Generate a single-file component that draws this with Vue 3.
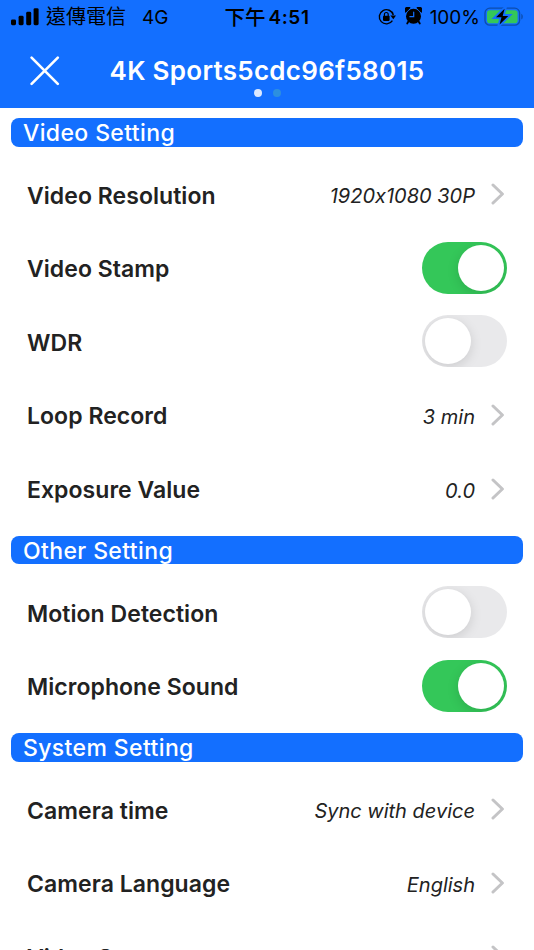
<template>
  <div class="page">
    <header class="header">
      <!-- phone status bar -->
      <div class="status">
        <div class="status-left">
          <svg class="signal" width="28" height="18" viewBox="0 0 28 18">
            <rect x="0" y="11.4" width="5" height="5.8" rx="1.4" />
            <rect x="7.6" y="7.8" width="5" height="9.4" rx="1.4" />
            <rect x="15.2" y="3.8" width="5" height="13.4" rx="1.4" />
            <rect x="22.6" y="0.2" width="5" height="17" rx="1.4" />
          </svg>
          <span class="carrier">遠傳電信</span>
          <span class="network">4G</span>
        </div>
        <div class="clock"><span class="period">下午</span><span class="time">4:51</span></div>
        <div class="status-right">
          <svg class="lock" width="18" height="18" viewBox="0 0 18 18">
            <path d="M14.4 12.6A7.1 7.1 0 1 1 15.3 7" fill="none" stroke="#000" stroke-width="1.4" />
            <path d="M12.4 7.5H18l-2.7 3.8z" />
            <rect x="5" y="7.7" width="6.6" height="5.2" rx="0.8" />
            <path d="M6.4 8V6.500a1.900 2 0 0 1 3.800 0V8" fill="none" stroke="#000" stroke-width="1.200" />
          </svg>
          <svg class="alarm" width="17" height="18" viewBox="0 0 17 18">
            <circle cx="8.5" cy="9.3" r="7.500" />
            <path d="M.6 5.400A3 3 0 0 1 5.200.8zM16.400 5.400A3 3 0 0 0 11.800.8z" stroke="#000" stroke-width=".8" stroke-linejoin="round" />
            <path d="M3.800 13.800l-1.600 2.700M13.200 13.800l1.600 2.700" stroke="#000" stroke-width="1.800" stroke-linecap="round" />
            <path d="M8.700 5.200v4.500H4.900" fill="none" stroke="#136fff" stroke-width="1.200" stroke-linecap="round" />
          </svg>
          <span class="percent">100%</span>
          <svg class="battery" width="40" height="20" viewBox="0 0 40 20">
            <rect x="1" y="1.200" width="34.600" height="17" rx="4.800" fill="none" stroke="#0c4dae" stroke-width="1.300" />
            <rect x="3" y="3.200" width="30.600" height="13" rx="2.800" fill="#34c759" />
            <path d="M37.300 6.800c2 .8 2 5 0 5.800z" fill="#0c4dae" />
            <path d="M20.600 1.800L12 10.200h5.500L15.600 17.500 24.300 8.900h-5.600z" stroke="#136fff" stroke-width="3.600" />
            <path d="M20.600 1.800L12 10.200h5.500L15.600 17.500 24.300 8.900h-5.600z" />
          </svg>
        </div>
      </div>
      <div class="navbar">
        <svg class="close" width="30" height="30" viewBox="0 0 30 30">
          <path d="M1.600 1.600l26.200 26.200M27.800 1.600L1.600 27.800" />
        </svg>
        <div class="heading">
          <h1>4K Sports5cdc96f58015</h1>
          <div class="dots"><i class="dot active"></i><i class="dot"></i></div>
        </div>
      </div>
    </header>

    <main>
      <section v-for="section in sections" :key="section.title">
        <h2>{{ section.title }}</h2>
        <ul>
          <li v-for="item in section.items" :key="item.name" @click="toggle(item)">
            <span class="name">{{ item.name }}</span>
            <span v-if="item.type == 'switch'" :class="item.on ? 'switch on' : 'switch'"></span>
            <template v-else>
              <span class="value">{{ item.value }}</span>
              <svg class="arrow" width="14" height="22" viewBox="0 0 14 22">
                <path d="M2 2l9.400 9L2 20" />
              </svg>
            </template>
          </li>
        </ul>
      </section>
    </main>
  </div>
</template>

<script setup>
import { reactive } from "vue";

const sections = reactive([
  {
    title: "Video Setting",
    items: [
      { name: "Video Resolution", value: "1920x1080 30P" },
      { name: "Video Stamp", type: "switch", on: true },
      { name: "WDR", type: "switch", on: false },
      { name: "Loop Record", value: "3 min" },
      { name: "Exposure Value", value: "0.0" },
    ],
  },
  {
    title: "Other Setting",
    items: [
      { name: "Motion Detection", type: "switch", on: false },
      { name: "Microphone Sound", type: "switch", on: true },
    ],
  },
  {
    title: "System Setting",
    items: [
      { name: "Camera time", value: "Sync with device" },
      { name: "Camera Language", value: "English" },
      { name: "Video S", value: "" },
    ],
  },
]);

const toggle = (item) => {
  if (item.type == "switch") item.on = !item.on;
};
</script>

<style>
body {
  margin: 0;
  background: #fff;
}
</style>

<style scoped>
.page {
  height: 950px;
  overflow: hidden;
  background: #fff;
  font-family: Inter, "Noto Sans CJK TC", sans-serif;
  color: #222;
}
.header {
  height: 107.5px;
  background: #136fff;
}
.status {
  display: grid;
  grid-template-columns: 1fr auto 1fr;
  align-items: center;
  height: 35px;
  padding: 0 10px 0 11px;
  color: #000;
  font-size: 19px;
  line-height: 35px;
}
.status-left,
.status-right,
.clock {
  display: flex;
  align-items: center;
  white-space: nowrap;
}
.status-right {
  justify-content: flex-end;
}
.signal {
  margin: 0 7px 2px 0;
}
.carrier {
  font-size: 20px;
}
.network {
  margin-left: 16px;
}
.clock {
  margin-right: 1px;
}
.period {
  font-size: 20.5px;
  font-weight: 500;
}
.time {
  margin-left: 3px;
  font-weight: 600;
  letter-spacing: 0.6px;
}
.lock {
  margin-bottom: 1px;
}
.alarm {
  margin: 0 8px 3px 9px;
}
.percent {
  margin-right: 4px;
}
.battery {
  margin-bottom: 1px;
}
.navbar {
  display: grid;
  grid-template-columns: 60px 1fr 60px;
  height: 72px;
}
.close {
  margin: 21px 0 0 30px;
}
.close path {
  fill: none;
  stroke: #fff;
  stroke-width: 2.6;
  stroke-linecap: round;
}
.heading {
  display: flex;
  flex-direction: column;
  align-items: center;
}
h1 {
  margin: 19px 0 0;
  font-size: 26px;
  line-height: 34px;
  font-weight: 600;
  letter-spacing: 0.28px;
  color: #fff;
  white-space: nowrap;
}
.dots {
  display: flex;
  gap: 11px;
  margin-top: 0.6px;
}
.dot {
  width: 8px;
  height: 8px;
  border-radius: 50%;
  background: #2c8fe0;
}
.dot.active {
  background: #dce9ff;
}
h2 {
  box-sizing: border-box;
  height: 28.3px;
  margin: 10.8px 11px;
  padding: 1px 0 0 12px;
  border-radius: 8px;
  background: #136fff;
  color: #fff;
  font-size: 23px;
  line-height: 28.3px;
  font-weight: 500;
  letter-spacing: 0.38px;
}
ul {
  list-style: none;
  margin: 0;
  padding: 0;
}
li {
  display: flex;
  align-items: center;
  height: 73.6px;
  padding: 0 27px;
}
.name {
  flex: 1;
  padding-top: 3px;
  font-size: 23px;
  font-weight: 600;
  letter-spacing: 0.05px;
}
.value {
  margin-right: 16px;
  padding-top: 4px;
  font-size: 20px;
  font-style: italic;
  /* keep the plain x between digits */
  font-feature-settings: "calt" 0;
}
.arrow {
  margin-right: 2px;
}
.arrow path {
  fill: none;
  stroke: #c4c4c6;
  stroke-width: 3;
  stroke-linecap: round;
  stroke-linejoin: round;
}
.switch {
  box-sizing: border-box;
  width: 85px;
  height: 52px;
  padding: 3px;
  border-radius: 26px;
  background: #e9e9eb;
  overflow: hidden;
}
.switch::before {
  content: "";
  display: block;
  width: 46px;
  height: 46px;
  border-radius: 50%;
  background: #fff;
  box-shadow: 0 3px 12px rgba(0, 0, 0, 0.13);
}
.switch.on {
  background: #34c759;
}
.switch.on::before {
  margin-left: auto;
}
</style>
